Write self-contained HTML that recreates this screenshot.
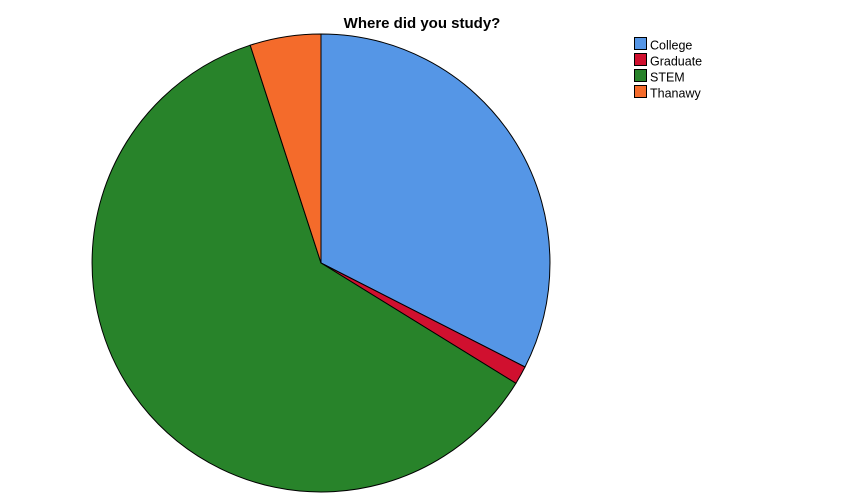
<html><body style="margin:0;background:#fff;width:845px;height:498px;overflow:hidden;font-family:'Liberation Sans',Arial,sans-serif">
<svg width="845" height="498" style="position:absolute;left:0;top:0">
<text x="422" y="28" text-anchor="middle" font-size="15" font-weight="bold" font-family="Liberation Sans, Arial, sans-serif">Where did you study?</text>
<g stroke="#000" stroke-width="1">
<path d="M321,263 L321,34 A229,229 0 0 1 525,367 Z" fill="#5596e6"/>
<path d="M321,263 L525,367 A229,229 0 0 1 515.9,383.3 Z" fill="#d0102f"/>
<path d="M321,263 L515.9,383.3 A229,229 0 1 1 250.2,45.2 Z" fill="#28832a"/>
<path d="M321,263 L250.2,45.2 A229,229 0 0 1 321,34 Z" fill="#f46b2b"/>
<rect x="634.5" y="37.5" width="12" height="12" fill="#5596e6"/>
<rect x="634.5" y="53.5" width="12" height="12" fill="#d0102f"/>
<rect x="634.5" y="69.5" width="12" height="12" fill="#28832a"/>
<rect x="634.5" y="85.5" width="12" height="12" fill="#f46b2b"/>
</g>
<g font-size="12.5" font-family="Liberation Sans, Arial, sans-serif">
<text x="650" y="49.5">College</text>
<text x="650" y="65.5">Graduate</text>
<text x="650" y="81.5">STEM</text>
<text x="650" y="97.5">Thanawy</text>
</g>
</svg>
</body></html>
